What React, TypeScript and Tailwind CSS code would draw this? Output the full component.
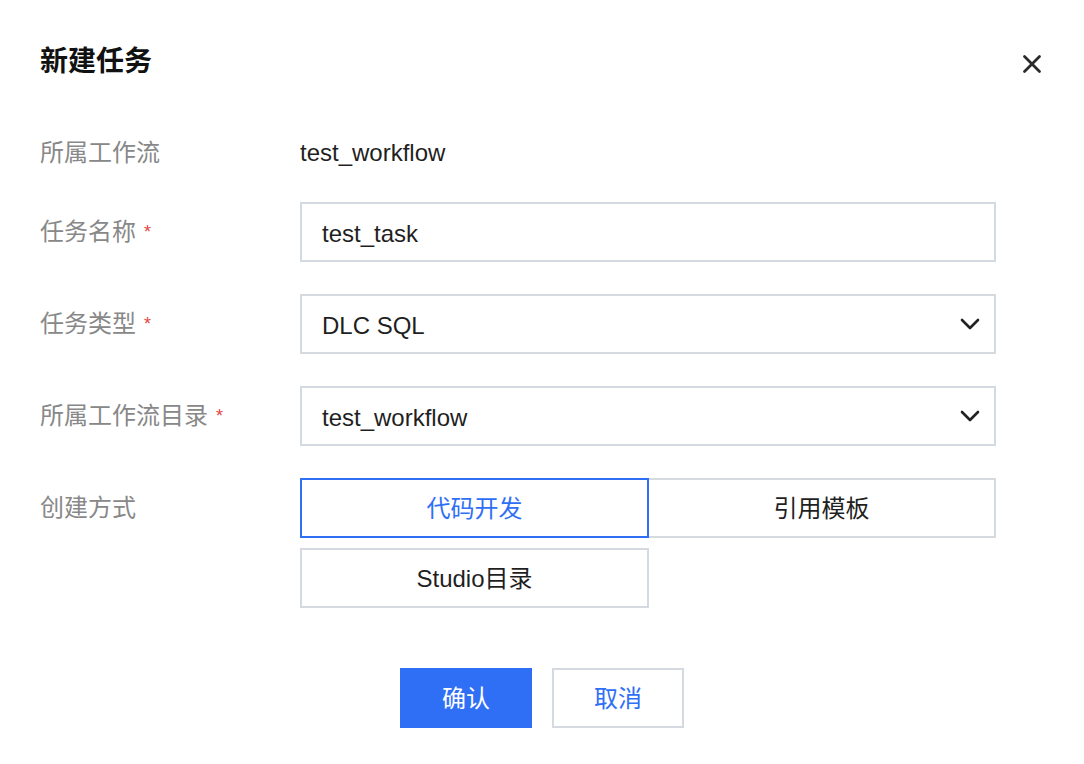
import type { ReactNode } from "react";

const font = { fontFamily: '"Liberation Sans", "Noto Sans CJK SC", sans-serif' };

function Label({ text, required }: { text: string; required?: boolean }) {
  return (
    <div className="flex w-[260px] shrink-0 items-center text-[24px] leading-[34px] text-[#888888]">
      {text}
      {required && <span className="ml-2 text-[18px] text-[#e54545]">*</span>}
    </div>
  );
}

function Chevron() {
  return (
    <svg width="20" height="12" viewBox="0 0 20 12" fill="none" className="text-[#222]">
      <path d="M2 2 L10 10 L18 2" stroke="currentColor" strokeWidth="2.6" strokeLinecap="round" strokeLinejoin="round" />
    </svg>
  );
}

function Box({ children, select }: { children: ReactNode; select?: boolean }) {
  return (
    <div className="flex h-[60px] w-[696px] items-center justify-between border-2 border-[#d5d9e0] pl-[20px] pr-[14px] text-[24px] text-[#1f1f1f]">
      <span className="pt-[3px]">{children}</span>
      {select && <Chevron />}
    </div>
  );
}

export default function App() {
  return (
    <div className="relative h-[764px] w-[1084px] bg-white" style={font}>
      <div className="flex items-center justify-between pl-[40px] pr-[41px] pt-[42px]">
        <h1 className="text-[28px] font-bold leading-[40px] text-[#111]">新建任务</h1>
        <svg width="22" height="22" viewBox="0 0 22 22" className="mt-[4px] text-[#2b2b2b]">
          <path d="M3.5 3.5 L18.5 18.5 M18.5 3.5 L3.5 18.5" stroke="currentColor" strokeWidth="2.8" strokeLinecap="round" />
        </svg>
      </div>

      <div className="mt-[54px] flex flex-col gap-[32px] pl-[40px]">
        <div className="flex items-center">
          <Label text="所属工作流" />
          <div className="text-[24px] leading-[34px] text-[#1f1f1f]">test_workflow</div>
        </div>
        <div className="flex items-center">
          <Label text="任务名称" required />
          <Box>test_task</Box>
        </div>
        <div className="flex items-center">
          <Label text="任务类型" required />
          <Box select>DLC SQL</Box>
        </div>
        <div className="flex items-center">
          <Label text="所属工作流目录" required />
          <Box select>test_workflow</Box>
        </div>
        <div className="flex items-start">
          <div className="flex h-[60px] items-center">
            <Label text="创建方式" />
          </div>
          <div className="flex w-[696px] flex-col gap-[10px]">
            <div className="flex">
              <div className="relative z-10 flex h-[60px] w-[349px] items-center justify-center border-2 border-[#2f6ff6] pt-[2px] text-[24px] text-[#2f6ff6]">
                代码开发
              </div>
              <div className="-ml-[2px] flex h-[60px] w-[349px] items-center justify-center border-2 border-[#d5d9e0] pt-[2px] text-[24px] text-[#1f1f1f]">
                引用模板
              </div>
            </div>
            <div className="flex h-[60px] w-[349px] items-center justify-center border-2 border-[#d5d9e0] pt-[2px] text-[24px] text-[#1f1f1f]">
              Studio目录
            </div>
          </div>
        </div>
      </div>

      <div className="mt-[60px] flex justify-center gap-[20px]">
        <button className="flex h-[60px] w-[132px] items-center justify-center bg-[#2f6ff6] pt-[2px] text-[24px] text-white">确认</button>
        <button className="flex h-[60px] w-[132px] items-center justify-center border-2 border-[#d5d9e0] bg-white pt-[2px] text-[24px] text-[#2f6ff6]">取消</button>
      </div>
    </div>
  );
}
